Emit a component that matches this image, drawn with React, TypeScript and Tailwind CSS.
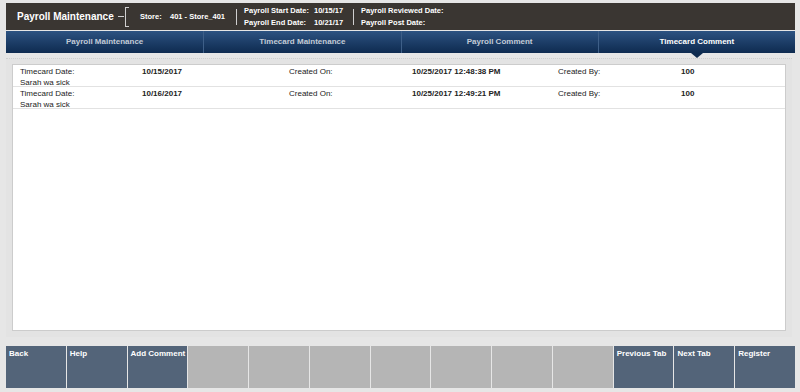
import React from 'react';

const tabs = [
  { label: 'Payroll Maintenance', active: false },
  { label: 'Timecard Maintenance', active: false },
  { label: 'Payroll Comment', active: false },
  { label: 'Timecard Comment', active: true },
];

const comments = [
  { date: '10/15/2017', created: '10/25/2017 12:48:38 PM', by: '100', text: 'Sarah wa sick' },
  { date: '10/16/2017', created: '10/25/2017 12:49:21 PM', by: '100', text: 'Sarah wa sick' },
];

const buttons = [
  'Back', 'Help', 'Add Comment', '', '', '', '', '', '', '', 'Previous Tab', 'Next Tab', 'Register',
];

export default function App() {
  return (
    <div
      className="w-[800px] h-[392px] bg-[#e6e6e6] flex flex-col pl-[6px] pr-[5px] pt-[3px] overflow-hidden"
      style={{ fontFamily: '"Liberation Sans", Arial, sans-serif' }}
    >
      {/* top header */}
      <div className="h-[27px] bg-[#3a3632] flex items-center text-white shrink-0 whitespace-nowrap">
        <div className="pl-[11px] text-[10px] font-bold w-[112px] shrink-0">Payroll Maintenance</div>
        <div className="flex items-center h-[20px] shrink-0">
          <div className="w-[6px] h-px bg-[#cfcfcf]" />
          <div className="w-[4px] h-[20px] border border-r-0 border-[#cfcfcf] ml-[1px]" />
        </div>
        <div className="ml-[11px] text-[7.5px] font-bold flex w-[96px] shrink-0">
          <span className="w-[30px]">Store:</span>
          <span>401 - Store_401</span>
        </div>
        <div className="w-px h-[16px] bg-[#cfcfcf] shrink-0" />
        <div className="ml-[7px] text-[7.5px] font-bold leading-[12px] grid grid-cols-[70px_auto] w-[109px] shrink-0">
          <span>Payroll Start Date:</span>
          <span>10/15/17</span>
          <span>Payroll End Date:</span>
          <span>10/21/17</span>
        </div>
        <div className="w-px h-[16px] bg-[#cfcfcf] shrink-0" />
        <div className="ml-[7px] text-[7.5px] font-bold leading-[12px] flex flex-col">
          <span>Payroll Reviewed Date:</span>
          <span>Payroll Post Date:</span>
        </div>
      </div>

      {/* tabs */}
      <div className="mt-px h-[22px] grid grid-cols-4 shrink-0 bg-gradient-to-b from-[#2d5382] via-[#1d3e68] to-[#0e2b50]">
        {tabs.map((t, i) => (
          <div
            key={t.label}
            className={
              'relative flex items-center justify-center text-[8px] font-bold whitespace-nowrap ' +
              (i > 0 ? 'border-l border-[#3e5f88] ' : '') +
              (t.active ? 'text-white' : 'text-[#c3cbd7]')
            }
          >
            {t.label}
            {t.active && (
              <div className="absolute top-full left-1/2 -translate-x-1/2 w-0 h-0 border-l-[6px] border-r-[6px] border-t-[5px] border-l-transparent border-r-transparent border-t-[#0e2b50]" />
            )}
          </div>
        ))}
      </div>

      {/* content area */}
      <div className="mt-[5px] mr-[3px] h-[279px] bg-[#e3e3e3] border-t border-dotted border-[#cfcfcf] px-[6px] pt-[5px] pb-[6px] shrink-0">
        <div className="h-full bg-white border border-[#cccccc]">
          {comments.map((c, i) => (
            <div key={i} className="h-[22px] border-b border-[#e2e2e2] pl-[7px] text-[8px] text-[#222] leading-[11px] pt-px whitespace-nowrap">
              <div className="flex">
                <span className="w-[122px]">Timecard Date:</span>
                <span className="w-[147px] font-bold">{c.date}</span>
                <span className="w-[123px]">Created On:</span>
                <span className="w-[146px] font-bold">{c.created}</span>
                <span className="w-[123px]">Created By:</span>
                <span className="font-bold">{c.by}</span>
              </div>
              <div>{c.text}</div>
            </div>
          ))}
        </div>
      </div>

      {/* button bar */}
      <div className="mt-[9px] h-[42px] grid grid-cols-13 gap-px shrink-0">
        {buttons.map((b, i) => (
          <div
            key={i}
            className={
              'text-[8px] font-bold text-white px-[3px] pt-[3px] leading-[10px] whitespace-nowrap overflow-hidden ' +
              (b ? 'bg-[#536479]' : 'bg-[#b5b5b5]')
            }
          >
            {b}
          </div>
        ))}
      </div>
    </div>
  );
}
